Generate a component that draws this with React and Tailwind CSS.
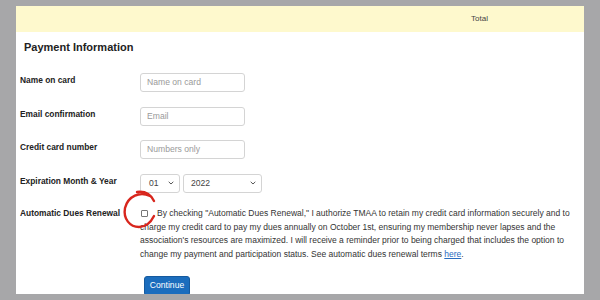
import React from "react";

const fields = [
  { label: "Name on card", placeholder: "Name on card" },
  { label: "Email confirmation", placeholder: "Email" },
  { label: "Credit card number", placeholder: "Numbers only" },
];

function Chevron({ className }) {
  return (
    <svg className={className} width="6" height="4" viewBox="0 0 6 4" fill="none">
      <path d="M0.7 0.8 L3 3 L5.3 0.8" stroke="#555" strokeWidth="1" />
    </svg>
  );
}

export default function App() {
  return (
    <div
      className="w-[600px] h-[300px] bg-[#a7a7a9] pt-[6px] pl-[16px] overflow-hidden text-[#333]"
      style={{ fontFamily: '"Liberation Sans", Arial, sans-serif' }}
    >
      <div className="w-[568px] h-[288px] bg-white overflow-hidden">
        <div className="h-[26px] bg-[#fef9cd] flex items-center justify-end pr-[96px] text-[8px] text-[#444]">
          Total
        </div>

        <div className="relative pl-[4px] pt-[7px]">
          <h2 className="ml-[4px] text-[11px] leading-[16px] font-bold text-[#222]">
            Payment Information
          </h2>

          <div className="mt-[18px] flex flex-col gap-[14.5px]">
            {fields.map((f) => (
              <div key={f.label} className="flex h-[19px]">
                <div className="w-[120px] text-[8.4px] font-bold leading-[12px] pt-[1px] text-[#222]">
                  {f.label}
                </div>
                <div className="w-[105px] h-[19px] border border-[#d4d4d4] rounded-[3px] flex items-center pl-[6px] text-[8.6px] text-[#9a9a9a]">
                  {f.placeholder}
                </div>
              </div>
            ))}

            <div className="flex h-[19px]">
              <div className="w-[120px] text-[8.4px] font-bold leading-[12px] pt-[1px] text-[#222]">
                Expiration Month &amp; Year
              </div>
              <div className="flex gap-[3px]">
                <div className="w-[40px] h-[19px] border border-[#d4d4d4] rounded-[3px] flex items-center justify-between pl-[8px] pr-[5px] text-[8.6px] text-[#444]">
                  <span>01</span>
                  <Chevron />
                </div>
                <div className="w-[79px] h-[19px] border border-[#d4d4d4] rounded-[3px] flex items-center justify-between pl-[7px] pr-[5px] text-[8.6px] text-[#444]">
                  <span>2022</span>
                  <Chevron />
                </div>
              </div>
            </div>

            <div className="flex">
              <div className="w-[120px] shrink-0 text-[8.4px] font-bold leading-[13.7px] text-[#222]">
                Automatic Dues Renewal
              </div>
              <p className="w-[436px] text-[8.5px] leading-[13.7px] text-[#333]">
                <span className="inline-block w-[7px] h-[7px] border border-[#777] rounded-[1px] mr-[9px] ml-[1px] align-[-0.5px]" />
                By checking "Automatic Dues Renewal," I authorize TMAA to retain my credit card information securely and to
                charge my credit card to pay my dues annually on October 1st, ensuring my membership never lapses and the
                association's resources are maximized. I will receive a reminder prior to being charged that includes the option to
                change my payment and participation status. See automatic dues renewal terms{" "}
                <a className="text-[#2a6cbf] underline">here</a>.
              </p>
            </div>
          </div>

          <button className="mt-[14px] ml-[124px] w-[46px] h-[20px] bg-[#1b6dbd] border border-[#155a9e] rounded-[3px] text-white text-[8.6px] flex items-center justify-center">
            Continue
          </button>

          {/* hand-drawn annotation circle around the checkbox */}
          <svg
            className="absolute left-[104px] top-[156px] pointer-events-none"
            width="42"
            height="44"
            viewBox="0 0 42 44"
            fill="none"
          >
            <path
              d="M30 8 C20 3, 8 8, 5 20 C3 31, 10 39, 19 39 C26 39, 31 34, 34 28 M17 4 C25 3, 31 7, 34 13"
              stroke="#d8261d"
              strokeWidth="2.4"
              strokeLinecap="round"
            />
          </svg>
        </div>
      </div>
    </div>
  );
}
